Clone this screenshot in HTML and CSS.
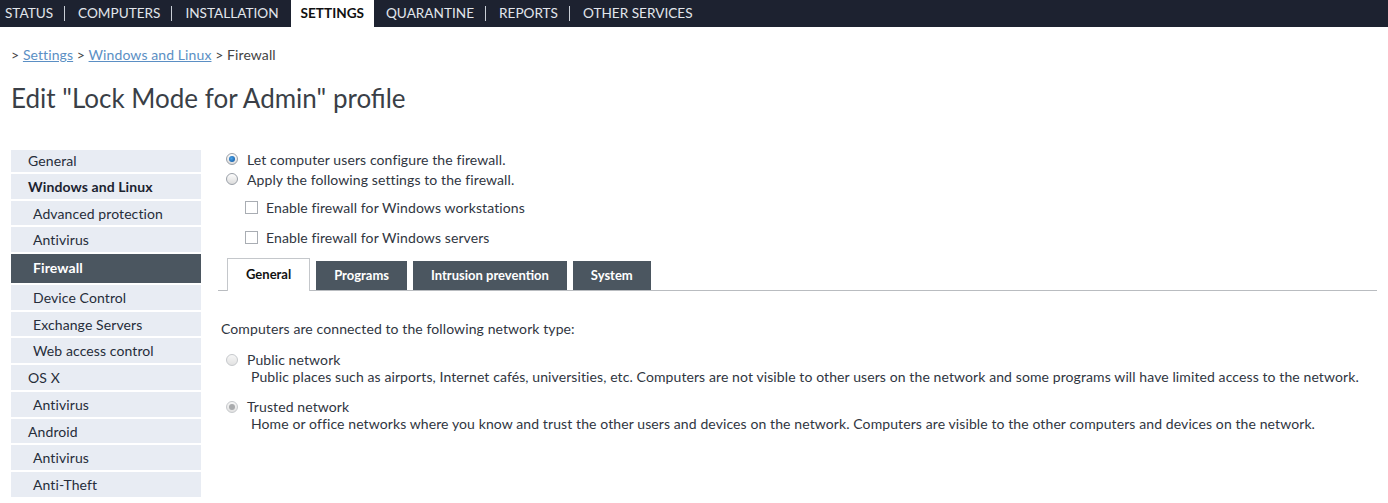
FILE: index.html
```html
<!DOCTYPE html>
<html>
<head>
<meta charset="utf-8">
<link rel="stylesheet" href="styles.css">
</head>
<body>
<nav class="topnav">
  <a class="nav-item first">STATUS</a><span class="sep"></span>
  <a class="nav-item">COMPUTERS</a><span class="sep"></span>
  <a class="nav-item">INSTALLATION</a>
  <a class="nav-item active">SETTINGS</a>
  <a class="nav-item">QUARANTINE</a><span class="sep"></span>
  <a class="nav-item">REPORTS</a><span class="sep"></span>
  <a class="nav-item">OTHER SERVICES</a>
</nav>

<div class="page">
  <div class="breadcrumb">&gt; <a href="#">Settings</a> &gt; <a href="#">Windows and Linux</a> &gt; Firewall</div>
  <h1 class="title">Edit "Lock Mode for Admin" profile</h1>

  <div class="layout">
    <ul class="sidebar">
      <li class="lvl1 short">General</li>
      <li class="lvl1 bold">Windows and Linux</li>
      <li class="lvl2">Advanced protection</li>
      <li class="lvl2">Antivirus</li>
      <li class="lvl2 current">Firewall</li>
      <li class="lvl2">Device Control</li>
      <li class="lvl2">Exchange Servers</li>
      <li class="lvl2">Web access control</li>
      <li class="lvl1">OS X</li>
      <li class="lvl2">Antivirus</li>
      <li class="lvl1">Android</li>
      <li class="lvl2">Antivirus</li>
      <li class="lvl2">Anti-Theft</li>
    </ul>

    <div class="content">
      <label class="opt"><span class="radio checked"></span>Let computer users configure the firewall.</label>
      <label class="opt"><span class="radio"></span>Apply the following settings to the firewall.</label>
      <div class="checks">
        <label class="chk"><span class="box"></span>Enable firewall for Windows workstations</label>
        <label class="chk"><span class="box"></span>Enable firewall for Windows servers</label>
      </div>

      <div class="tabs">
        <div class="tab active">General</div>
        <div class="tab">Programs</div>
        <div class="tab">Intrusion prevention</div>
        <div class="tab">System</div>
      </div>

      <div class="panel">
        <p class="lead">Computers are connected to the following network type:</p>
        <div class="net">
          <label class="net-title"><span class="radio disabled"></span>Public network</label>
          <div class="net-desc">Public places such as airports, Internet cafés, universities, etc. Computers are not visible to other users on the network and some programs will have limited access to the network.</div>
        </div>
        <div class="net">
          <label class="net-title"><span class="radio disabled checked"></span>Trusted network</label>
          <div class="net-desc">Home or office networks where you know and trust the other users and devices on the network. Computers are visible to the other computers and devices on the network.</div>
        </div>
      </div>
    </div>
  </div>
</div>
</body>
</html>
```

FILE: styles.css
```css
* { box-sizing: border-box; }
html, body { margin: 0; padding: 0; background: #fff; }
body {
  font-family: "Lato", "Liberation Sans", sans-serif;
  font-size: 14px;
  letter-spacing: 0.1px;
  color: #30363f;
}

.topnav {
  display: flex;
  align-items: center;
  height: 27px;
  background: #1d2230;
}
.nav-item {
  color: #e2e6ec;
  font-size: 13.6px;
  letter-spacing: 0;
  line-height: 27px;
  height: 27px;
  display: block;
}
.nav-item.first { margin-left: 5px; }
.nav-item.active {
  background: #fff;
  color: #111;
  font-weight: bold;
  padding: 0 10px 0 10px;
  margin: 0 12px 0 12px;
}
.sep {
  width: 1px;
  height: 15px;
  background: #c9ced6;
  margin: 0 13px 0 11px;
}

.page { padding: 0 11px; }
.breadcrumb {
  margin-top: 20px;
  line-height: 16px;
  color: #444;
}
.breadcrumb a { color: #5b8fc4; text-decoration: underline; }
.title {
  font-weight: normal;
  font-size: 26px;
  letter-spacing: 0;
  color: #3a3f47;
  margin: 22px 0 0;
  line-height: 26px;
}

.layout {
  display: flex;
  margin-top: 39px;
}
.sidebar {
  list-style: none;
  margin: 0;
  padding: 0;
  width: 190px;
  flex: none;
}
.sidebar li {
  background: #e8ecf3;
  border-bottom: 2px solid #fff;
  height: 26.7px;
  padding-top: 1px;
  line-height: 23px;
  color: #262d3a;
}
.sidebar .short { height: 24px; padding-top: 0; line-height: 22px; }
.sidebar .lvl1 { padding-left: 17px; }
.sidebar .lvl2 { padding-left: 22px; }
.sidebar .bold { font-weight: bold; color: #1c2330; }
.sidebar .current {
  background: #4b5660;
  color: #fff;
  font-weight: bold;
  height: 31px;
  padding-top: 0;
  line-height: 28px;
}

.content {
  flex: 1;
  padding-left: 25px;
}
.opt {
  display: flex;
  align-items: center;
  height: 20px;
}
.opt:first-child { margin-top: -1px; }
.radio {
  width: 12px;
  height: 12px;
  border-radius: 50%;
  border: 1px solid #9aa0a8;
  background: linear-gradient(#fdfdfd, #dcdcdc);
  margin-right: 9px;
  flex: none;
  display: inline-block;
  position: relative;
}
.radio.checked::after {
  content: "";
  position: absolute;
  left: 2px; top: 2px;
  width: 6px; height: 6px;
  border-radius: 50%;
  background: radial-gradient(circle at 40% 40%, #4aa3e8, #0b4f9a);
}
.radio.disabled { border-color: #c6c9cc; background: linear-gradient(#f6f6f6, #e2e2e2); }
.radio.disabled.checked::after { background: #a9abad; }

.checks { padding-left: 19px; padding-top: 3px; }
.chk {
  display: flex;
  align-items: center;
  height: 30px;
}
.box {
  width: 13px; height: 13px;
  border: 1px solid #a9adb3;
  background: #fff;
  margin-right: 8px;
  display: inline-block;
  flex: none;
}

.tabs {
  display: flex;
  gap: 6px;
  margin-top: 6px;
  margin-left: -8px;
  padding-left: 9px;
  border-bottom: 1px solid #b9bcc0;
  height: 33px;
  align-items: flex-end;
}
.tab {
  background: #4b5660;
  color: #fff;
  font-weight: bold;
  font-size: 13px;
  letter-spacing: 0;
  padding: 0 18px;
  height: 29px;
  line-height: 29px;
}
.tab.active {
  background: #fff;
  color: #111;
  border: 1px solid #c4c7cb;
  border-bottom: none;
  height: 33px;
  line-height: 31px;
  margin-bottom: -1px;
}

.panel { margin-left: -5px; padding-top: 30px; }
.lead { margin: 0 0 15px; line-height: 16px; }
.net { margin-bottom: 13px; }
.net-title {
  display: flex;
  align-items: center;
  padding-left: 5px;
  line-height: 16px;
}
.net-desc { padding-left: 30px; line-height: 18px; }
```
